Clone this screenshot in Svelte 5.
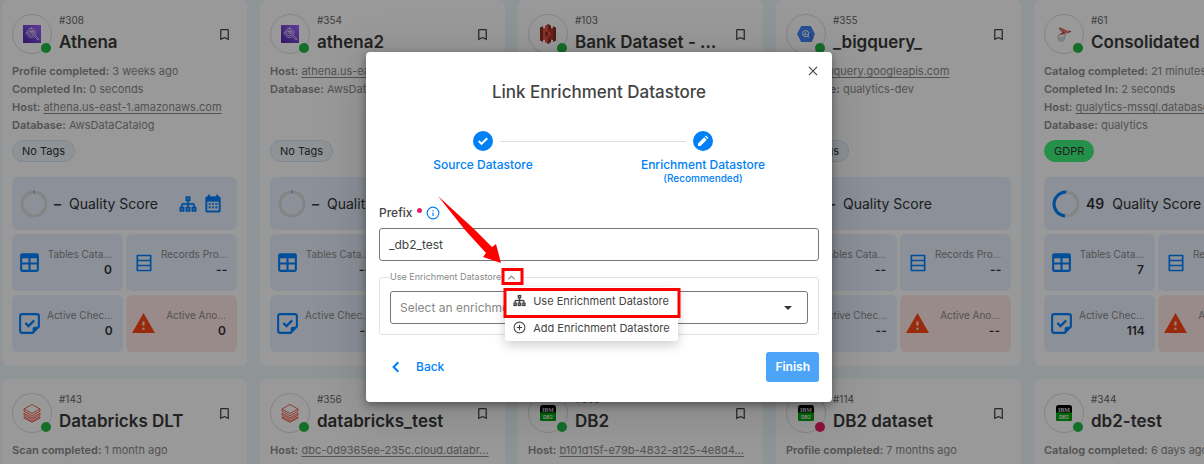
<script lang="ts">
    type Card = {
        id: number;
        name: string;
        logo: string;
        offline?: boolean;
        details: { label: string; value: string; link?: boolean }[];
        tag?: string;
        score?: number;
        tables?: string;
        checks?: string;
        anomalies?: string;
        shortcuts?: boolean;
    };

    const logos: Record<string, string> = {
        athena: '<defs><linearGradient id="athena-bg" x1="0" y1="1" x2="1" y2="0"><stop offset="0" stop-color="#4d27a8"/><stop offset="1" stop-color="#a166ff"/></linearGradient></defs><rect x="3" y="3" width="18" height="18" fill="url(#athena-bg)"/><g fill="none" stroke="#fff" stroke-opacity=".75" stroke-width=".8"><circle cx="11.5" cy="11" r="4.6"/><circle cx="11.5" cy="11" r="2.9"/><path d="M5.5 11h2M11.5 5v2M10 9.5l3 3M10 12.5l3-3M10 9.5h3v3M14.5 14.5l3.5 3.5 1-1-3.5-3.5"/></g>',
        s3: '<path d="M4 5.5L7 4v16l-3-1.500zM20 5.500L17 4v16l3-1.500z" fill="#8c3123"/><path d="M7 6l5 1v10l-5 1z" fill="#e05243"/><path d="M17 6l-5 1v10l5 1z" fill="#b8362b"/><path d="M9 4l3-2 3 2v3l-3 .7L9 7zM9 17l3-.7 3 .7v3l-3 2-3-2z" fill="#e05243"/><path d="M12 2l3 2v3l-3 .7zM12 16.300l3 .7v3l-3 2zM9.500 10l2.500-.5v5L9.500 14z" fill="#8c3123"/><path d="M12 9.500l2.500.5v4l-2.500.5z" fill="#e05243"/>',
        bigquery: '<path d="M7.800 4h8.400a1 1 0 0 1 .9.500l3.500 6.700a1.500 1.500 0 0 1 0 1.600l-3.500 6.700a1 1 0 0 1-.9.500H7.800a1 1 0 0 1-.9-.5l-3.500-6.700a1.500 1.500 0 0 1 0-1.600L6.900 4.500a1 1 0 0 1 .9-.5z" fill="#4386fa"/><path d="M14 14l3 6h1l2-5-5-4z" fill="#3367d6" opacity=".6"/><circle cx="11.700" cy="11.700" r="3.100" fill="none" stroke="#fff" stroke-width="1"/><path d="M14 14l1.800 1.800M10.300 11.500v1.500M11.700 10.500V13.500M13.100 12v1" stroke="#fff" stroke-width=".9"/>',
        mssql: '<path d="M7 6c2 .5 5 1 7 3l5 .5c-1.500.5-2 1-4 1.200-1.500.8-3 1.300-5 1.500L7.500 13l3-2.500L7 6z" fill="none" stroke="#c8332d" stroke-width=".9"/><path d="M9 7l4 4M12 8l-1 4M14 9l-5 3.500" stroke="#c8332d" stroke-width="1"/><g fill="none" stroke="#b8bcc0" stroke-width=".8"><ellipse cx="9.500" cy="14" rx="4" ry="1.600" transform="rotate(-15 9.500 14)"/><path d="M5.600 14.800l1.400 4.200c1.500 1 4 .5 5-1l1.400-4.800M7.500 15.800l1 3.500M10.500 15.500v3.700M6 17c2 1.300 5 .6 7-1"/></g>',
        databricks: '<g fill="none" stroke="#f0503c" stroke-width=".9" stroke-linejoin="round"><path d="M4 8l8-4.500L20 8l-8 4.500zM4 8v2.200l8 4.500 8-4.500V8"/><path d="M4 12.300v1.700l8 4.400 8-4.400v-1.700l-8 4.400z"/><path d="M4 15.800v1.200l8 4.200 8-4.200v-1.200l-8 4.400z"/></g>',
        db2: '<rect x="4" y="4" width="16" height="16" rx="2.500" fill="#000"/><path d="M4 11.500h16v6a2.500 2.500 0 0 1-2.500 2.500h-11A2.500 2.500 0 0 1 4 17.500z" fill="#00a80c"/><text x="12" y="10.500" text-anchor="middle" font-family="Liberation Serif, serif" font-weight="700" font-size="6" fill="#ddd">IBM</text><text x="12" y="17.500" text-anchor="middle" font-family="Inter, sans-serif" font-weight="700" font-size="5" fill="#eee">DB2</text>',
    };

    const icons: Record<string, string> = {
        bookmark: '<path d="M17 3H7a2 2 0 0 0-2 2v16l7-3 7 3V5a2 2 0 0 0-2-2zm0 15l-5-2.180L7 18V5h10z" fill="currentColor"/>',
        sitemap: '<path d="M9 2v6h2v3H5a2 2 0 0 0-2 2v3H1v6h6v-6H5v-3h6v3H9v6h6v-6h-2v-3h6v3h-2v6h6v-6h-2v-3a2 2 0 0 0-2-2h-6V8h2V2H9zm2 2h2v2h-2zM3 18h2v2H3zm8 0h2v2h-2zm8 0h2v2h-2z" fill="currentColor" stroke="currentColor" stroke-width=".6"/>',
        calendar: '<path d="M19 3h-1V1h-2v2H8V1H6v2H5a2 2 0 0 0-2 2v15a2 2 0 0 0 2 2h14a2 2 0 0 0 2-2V5a2 2 0 0 0-2-2zm0 17H5V9h14zM7 11h2v2H7zm4 0h2v2h-2zm4 0h2v2h-2zM7 15h2v2H7zm4 0h2v2h-2zm4 0h2v2h-2z" fill="currentColor" stroke="currentColor" stroke-width=".4"/>',
        table: '<path d="M5 3h14a2 2 0 0 1 2 2v14a2 2 0 0 1-2 2H5a2 2 0 0 1-2-2V5a2 2 0 0 1 2-2zm0 5v4h6V8zm8 0v4h6V8zm-8 6v5h6v-5zm8 0v5h6v-5z" fill="currentColor"/>',
        rows: '<path d="M4 3h16v18H4zM4 9h16M4 15h16" fill="none" stroke="currentColor" stroke-width="2" stroke-linejoin="round"/>',
        check: '<path d="M15 21H5a2 2 0 0 1-2-2V5a2 2 0 0 1 2-2h14a2 2 0 0 1 2 2v10z" fill="none" stroke="currentColor" stroke-width="2"/><path d="M21 15l-6 6v-4a2 2 0 0 1 2-2z" fill="currentColor"/><path d="M8 11.500l3 3 5.500-5.500" fill="none" stroke="currentColor" stroke-width="2.200"/>',
        alert: '<path d="M1 21h22L12 2zm12-3h-2v-2h2zm0-4h-2v-4h2z" fill="currentColor"/>',
        close: '<path d="M5 5l14 14M19 5L5 19" stroke="currentColor" stroke-width="2"/>',
        done: '<path d="M3.500 12l5.500 5.500L20.500 6.500" fill="none" stroke="currentColor" stroke-width="4"/>',
        pencil: '<path d="M2 22v-5L14.500 4.500l5 5L7 22zM16 3l2-2 5 5-2 2z" fill="currentColor"/>',
        info: '<circle cx="12" cy="12" r="10" fill="none" stroke="currentColor" stroke-width="2"/><path d="M11 7h2v2h-2zM11 11h2v6h-2z" fill="currentColor"/>',
        up: '<path d="M5 16l7-7 7 7" fill="none" stroke="currentColor" stroke-width="2.500"/>',
        left: '<path d="M16 4l-8 8 8 8" fill="none" stroke="currentColor" stroke-width="3.500"/>',
        plus: '<circle cx="12" cy="12" r="10" fill="none" stroke="currentColor" stroke-width="2"/><path d="M12 7v10M7 12h10" stroke="currentColor" stroke-width="2"/>',
    };

    const cards: Card[] = [
        {
            id: 308,
            name: "Athena",
            logo: "athena",
            shortcuts: true,
            tables: "0",
            checks: "0",
            anomalies: "0",
            details: [
                { label: "Profile completed:", value: "3 weeks ago" },
                { label: "Completed In:", value: "0 seconds" },
                { label: "Host:", value: "athena.us-east-1.amazonaws.com", link: true },
                { label: "Database:", value: "AwsDataCatalog" },
            ],
        },
        {
            id: 354,
            name: "athena2",
            logo: "athena",
            details: [
                { label: "Host:", value: "athena.us-east-1.amazonaws.com", link: true },
                { label: "Database:", value: "AwsDataCatalog" },
            ],
        },
        {
            id: 103,
            name: "Bank Dataset - …",
            logo: "s3",
            details: [{ label: "Catalog completed:", value: "1 week ago" }],
        },
        {
            id: 355,
            name: "_bigquery_",
            logo: "bigquery",
            details: [
                { label: "Host:", value: "bigquery.googleapis.com", link: true },
                { label: "Database:", value: "qualytics-dev" },
            ],
        },
        {
            id: 61,
            name: "Consolidated",
            logo: "mssql",
            tag: "GDPR",
            score: 49,
            tables: "7",
            checks: "114",
            details: [
                { label: "Catalog completed:", value: "21 minutes ago" },
                { label: "Completed In:", value: "2 seconds" },
                { label: "Host:", value: "qualytics-mssql.database…", link: true },
                { label: "Database:", value: "qualytics" },
            ],
        },
        {
            id: 143,
            name: "Databricks DLT",
            logo: "databricks",
            details: [{ label: "Scan completed:", value: "1 month ago" }],
        },
        {
            id: 356,
            name: "databricks_test",
            logo: "databricks",
            details: [{ label: "Host:", value: "dbc-0d9365ee-235c.cloud.databr…", link: true }],
        },
        {
            id: 336,
            name: "DB2",
            logo: "db2",
            details: [{ label: "Host:", value: "b101d15f-e79b-4832-a125-4e8d4…", link: true }],
        },
        {
            id: 114,
            name: "DB2 dataset",
            logo: "db2",
            offline: true,
            details: [{ label: "Profile completed:", value: "7 months ago" }],
        },
        {
            id: 344,
            name: "db2-test",
            logo: "db2",
            details: [{ label: "Catalog completed:", value: "6 days ago" }],
        },
    ];

    let prefix = $state("_db2_test");
    let menuOpen = $state(true);
</script>

{#snippet icon(name: string, size: number)}
    <svg width={size} height={size} viewBox="0 0 24 24" aria-hidden="true">
        {@html icons[name]}
    </svg>
{/snippet}

{#snippet stat(name: string, label: string, value: string)}
    <div class="tile stat" class:danger={name === "alert"}>
        <span class="stat-icon">
            {@render icon(name, name === "rows" ? 20 : 25)}
        </span>
        <div class="stat-text">
            <span class="stat-label">{label}</span>
            <strong>{value}</strong>
        </div>
    </div>
{/snippet}

<div class="page">
    <main class="grid" inert>
        {#each cards as card}
            <article class="card">
                <header>
                    <div class="avatar">
                        <svg width="24" height="24" viewBox="0 0 24 24">
                            {@html logos[card.logo]}
                        </svg>
                        <span class="status" class:offline={card.offline}></span>
                    </div>
                    <div class="heading">
                        <span class="number">#{card.id}</span>
                        <h2>{card.name}</h2>
                    </div>
                    <button class="bookmark" aria-label="Bookmark">
                        {@render icon("bookmark", 15)}
                    </button>
                </header>
                <div class="details">
                    {#each card.details as row}
                        <div class="detail">
                            <b>{row.label}</b>
                            {#if row.link}
                                <a href="#{card.id}">{row.value}</a>
                            {:else}
                                <span>{row.value}</span>
                            {/if}
                        </div>
                    {/each}
                </div>
                <span class="tag" class:green={card.tag}>{card.tag ?? "No Tags"}</span>
                <div class="tiles">
                    <div class="tile quality">
                        <svg width="28" height="28" viewBox="0 0 28 28">
                            <circle class="ring" cx="14" cy="14" r="12" />
                            <circle
                                class="arc"
                                cx="14"
                                cy="14"
                                r="12"
                                pathLength="100"
                                stroke-dasharray="{card.score ?? 1} 100"
                                transform="rotate({card.score ? 95 : -92} 14 14)"
                            />
                        </svg>
                        <strong>{card.score ?? "–"}</strong>
                        <span class="quality-label">Quality Score</span>
                        {#if card.shortcuts}
                            <span class="shortcuts">
                                <button aria-label="Lineage">{@render icon("sitemap", 18)}</button>
                                <button aria-label="Schedule">{@render icon("calendar", 20)}</button>
                            </span>
                        {/if}
                    </div>
                    {@render stat("table", "Tables Cata…", card.tables ?? "--")}
                    {@render stat("rows", "Records Pro…", "--")}
                    {@render stat("check", "Active Chec…", card.checks ?? "--")}
                    {@render stat("alert", "Active Ano…", card.anomalies ?? "--")}
                </div>
            </article>
        {/each}
    </main>

    <div class="overlay">
        <div class="dialog" role="dialog" aria-modal="true" aria-labelledby="dialog-title">
            <button class="close" aria-label="Close">{@render icon("close", 14)}</button>
            <h1 id="dialog-title">Link Enrichment Datastore</h1>

            <div class="stepper">
                <span class="line"></span>
                <div class="step first">
                    <span class="dot">{@render icon("done", 12)}</span>
                    <span>Source Datastore</span>
                </div>
                <div class="step second">
                    <span class="dot">{@render icon("pencil", 12)}</span>
                    <span>Enrichment Datastore</span>
                    <small>(Recommended)</small>
                </div>
            </div>

            <div class="field-label">
                <label for="prefix">Prefix</label>
                <span class="required"></span>
                <span class="info">{@render icon("info", 14)}</span>
            </div>
            <input id="prefix" class="control" type="text" bind:value={prefix} />

            <fieldset>
                <legend>
                    <span>Use Enrichment Datastore</span>
                    <span class="switch">
                        <button
                            class="caret"
                            aria-label="Change mode"
                            aria-expanded={menuOpen}
                            onclick={() => (menuOpen = !menuOpen)}
                        >
                            {@render icon("up", 11)}
                        </button>
                        {#if menuOpen}
                            <div class="menu">
                                <button>{@render icon("sitemap", 13)}Use Enrichment Datastore</button>
                                <button>{@render icon("plus", 13)}Add Enrichment Datastore</button>
                            </div>
                        {/if}
                    </span>
                </legend>
                <div class="select">
                    <select class="control" aria-label="Enrichment datastore">
                        <option>Select an enrichment datastore</option>
                    </select>
                    <span class="arrow"></span>
                </div>
            </fieldset>

            <div class="actions">
                <button class="back">{@render icon("left", 14)}Back</button>
                <button class="finish">Finish</button>
            </div>

            <svg class="marks" width="466" height="350" viewBox="0 0 466 350" aria-hidden="true">
                <path d="M72 144L108 177 126 195 130 192 135 211 117 205 120 201 99 178z" />
                <rect x="137" y="217.500" width="19" height="14" />
                <rect x="139" y="237.500" width="174" height="27" />
            </svg>
        </div>
    </div>
</div>

<style>
    :global(body) {
        margin: 0;
        background: #eff7fc;
        font-family: Inter, "Open Sans", sans-serif;
    }

    .page {
        position: relative;
        height: 100vh;
        overflow: hidden;
    }

    button {
        display: inline-flex;
        align-items: center;
        padding: 0;
        border: 0;
        background: none;
        color: inherit;
        font: inherit;
        cursor: pointer;
    }

    svg {
        display: block;
        flex: none;
    }

    .grid {
        display: grid;
        grid-template-columns: repeat(5, minmax(245px, 1fr));
        gap: 13px;
        padding-left: 2px;
    }

    .card {
        box-sizing: border-box;
        min-width: 0;
        padding: 14px 10px;
        border-radius: 6px;
        background: #fff;
    }

    .card header {
        display: flex;
        align-items: center;
        height: 40px;
    }

    .avatar {
        box-sizing: border-box;
        position: relative;
        display: grid;
        place-items: center;
        flex: none;
        width: 40px;
        height: 40px;
        border: 1px solid #ddd;
        border-radius: 50%;
    }

    .status {
        position: absolute;
        right: 0;
        bottom: 0;
        width: 10px;
        height: 10px;
        border-radius: 50%;
        background: #22b945;
    }

    .status.offline {
        background: #e91e63;
    }

    .heading {
        flex: 1;
        min-width: 0;
        padding-left: 7px;
        white-space: nowrap;
    }

    .number {
        display: block;
        color: #666;
        font-size: 10px;
        line-height: 16px;
    }

    h2 {
        margin: 0;
        color: #3a3a3a;
        font-size: 17px;
        font-weight: 600;
        line-height: 28px;
    }

    .bookmark {
        margin-right: 5px;
        color: #444;
    }

    .details {
        min-height: 72px;
        padding-top: 8px;
        color: #8a8a8a;
        font-size: 11px;
        line-height: 18px;
    }

    .detail {
        overflow: hidden;
        white-space: nowrap;
    }

    .detail b {
        font-weight: 600;
    }

    .detail a {
        color: inherit;
        text-underline-offset: 2px;
    }

    .tag {
        box-sizing: border-box;
        display: inline-block;
        height: 22px;
        margin-top: 6px;
        padding: 0 9px;
        border: 1px solid #d5e4f2;
        border-radius: 11px;
        background: #eef5fb;
        color: #333;
        font-size: 11px;
        line-height: 20px;
        vertical-align: top;
    }

    .tag.green {
        border-color: #3ef07b;
        background: #3ef07b;
    }

    .tiles {
        display: grid;
        grid-template-columns: repeat(2, minmax(0, 1fr));
        gap: 4px 3px;
        margin-top: 15px;
    }

    .tile {
        display: flex;
        align-items: center;
        height: 57px;
        border-radius: 6px;
        background: #e8f1ff;
    }

    .quality {
        grid-column: 1 / 3;
        height: 53px;
        padding: 0 14px 0 8px;
        color: #333;
        font-size: 14px;
        white-space: nowrap;
    }

    .quality strong {
        margin: 0 8px 0 6px;
        font-weight: 600;
    }

    .ring,
    .arc {
        fill: none;
        stroke: #ddd;
        stroke-width: 3;
    }

    .arc {
        stroke: #0080ff;
    }

    .shortcuts {
        display: flex;
        gap: 6px;
        margin-left: auto;
        color: #0080ff;
    }

    .stat {
        color: #0080ff;
    }

    .stat.danger {
        background: #ffe8e4;
        color: #ff4713;
    }

    .stat-icon {
        display: grid;
        place-items: center;
        flex: none;
        width: 35px;
    }

    .stat-text {
        display: flex;
        flex: 1;
        flex-direction: column;
        align-items: flex-end;
        padding: 0 11px 2px 0;
        line-height: 16px;
    }

    .stat-label {
        color: #8a8a8a;
        font-size: 10px;
        white-space: nowrap;
    }

    .stat strong {
        color: #333;
        font-size: 12px;
        font-weight: 600;
    }

    .overlay {
        position: absolute;
        inset: 0;
        display: flex;
        align-items: center;
        justify-content: center;
        padding: 0 6px 10px 0;
        background: rgba(0, 0, 0, 0.4);
    }

    .dialog {
        box-sizing: border-box;
        position: relative;
        width: 466px;
        max-width: 100%;
        padding: 28px 13px 20px;
        border-radius: 4px;
        background: #fff;
        box-shadow:
            0 3px 8px rgba(0, 0, 0, 0.4),
            0 9px 46px 8px rgba(0, 0, 0, 0.12);
        color: #444;
        font-size: 12px;
        line-height: 16px;
    }

    .close {
        position: absolute;
        top: 12px;
        right: 12px;
    }

    h1 {
        margin: 0;
        font-size: 17px;
        font-weight: 500;
        line-height: 24px;
        text-align: center;
    }

    .stepper {
        display: grid;
        grid-template-columns: 1fr 1fr;
        margin: 27px 6px 0 -6px;
        color: #0080f6;
        font-weight: 500;
    }

    .line {
        grid-area: 1 / 1 / 2 / 3;
        height: 1px;
        margin: 10px calc(25% + 17px) 0;
        background: #ddd;
    }

    .step {
        display: flex;
        flex-direction: column;
        align-items: center;
    }

    .step.first {
        grid-area: 1 / 1;
    }

    .step.second {
        grid-area: 1 / 2;
    }

    .step small {
        font-size: 10px;
        line-height: 10px;
    }

    .dot {
        display: grid;
        place-items: center;
        width: 20px;
        height: 20px;
        margin-bottom: 6px;
        border-radius: 50%;
        background: #0080f6;
        color: #fff;
    }

    .field-label {
        display: flex;
        align-items: center;
        margin: 22px 0 7px;
        font-weight: 500;
    }

    .required {
        width: 5px;
        height: 5px;
        margin: 0 4px 6px 5px;
        border-radius: 50%;
        background: #e91e63;
    }

    .info {
        color: #0080f6;
    }

    .control {
        box-sizing: border-box;
        display: block;
        width: 100%;
        height: 33px;
        padding: 0 9px;
        border: 1px solid #777;
        border-radius: 3px;
        background: #fff;
        color: #444;
        font: inherit;
    }

    fieldset {
        min-width: 0;
        margin: 8px 0 0;
        padding: 6px 10px 10px;
        border: 1px solid #e2e2e2;
        border-radius: 3px;
    }

    legend {
        display: flex;
        align-items: center;
        padding: 0;
        color: #888;
        font-size: 9px;
    }

    .switch {
        position: relative;
    }

    .caret {
        justify-content: center;
        width: 21px;
        height: 16px;
        vertical-align: top;
    }

    .menu {
        position: absolute;
        z-index: 1;
        top: 18px;
        left: 4px;
        border-radius: 3px;
        background: #fff;
        box-shadow: 0 4px 12px rgba(0, 0, 0, 0.2);
        color: #444;
        font-size: 11px;
    }

    .menu button {
        gap: 7px;
        width: 100%;
        height: 27px;
        padding: 0 8px;
        white-space: nowrap;
    }

    .select {
        display: grid;
        align-items: center;
    }

    .select > * {
        grid-area: 1 / 1;
    }

    .select .control {
        appearance: none;
        color: #888;
    }

    .arrow {
        justify-self: end;
        margin-right: 16px;
        border: 4px solid transparent;
        border-top-color: #333;
        border-bottom: 0;
        pointer-events: none;
    }

    .actions {
        display: flex;
        align-items: center;
        justify-content: space-between;
        margin-top: 17px;
        font-weight: 500;
    }

    .back {
        gap: 13px;
        padding-left: 10px;
        color: #0080f6;
    }

    .finish {
        height: 30px;
        padding: 0 9px;
        border-radius: 3px;
        background: #4ca4f8;
        color: #fff;
        font-weight: 600;
    }

    .marks {
        position: absolute;
        z-index: 2;
        top: 0;
        left: 0;
        pointer-events: none;
    }

    .marks path {
        fill: #f00;
    }

    .marks rect {
        fill: none;
        stroke: #f00;
        stroke-width: 3;
    }
</style>
